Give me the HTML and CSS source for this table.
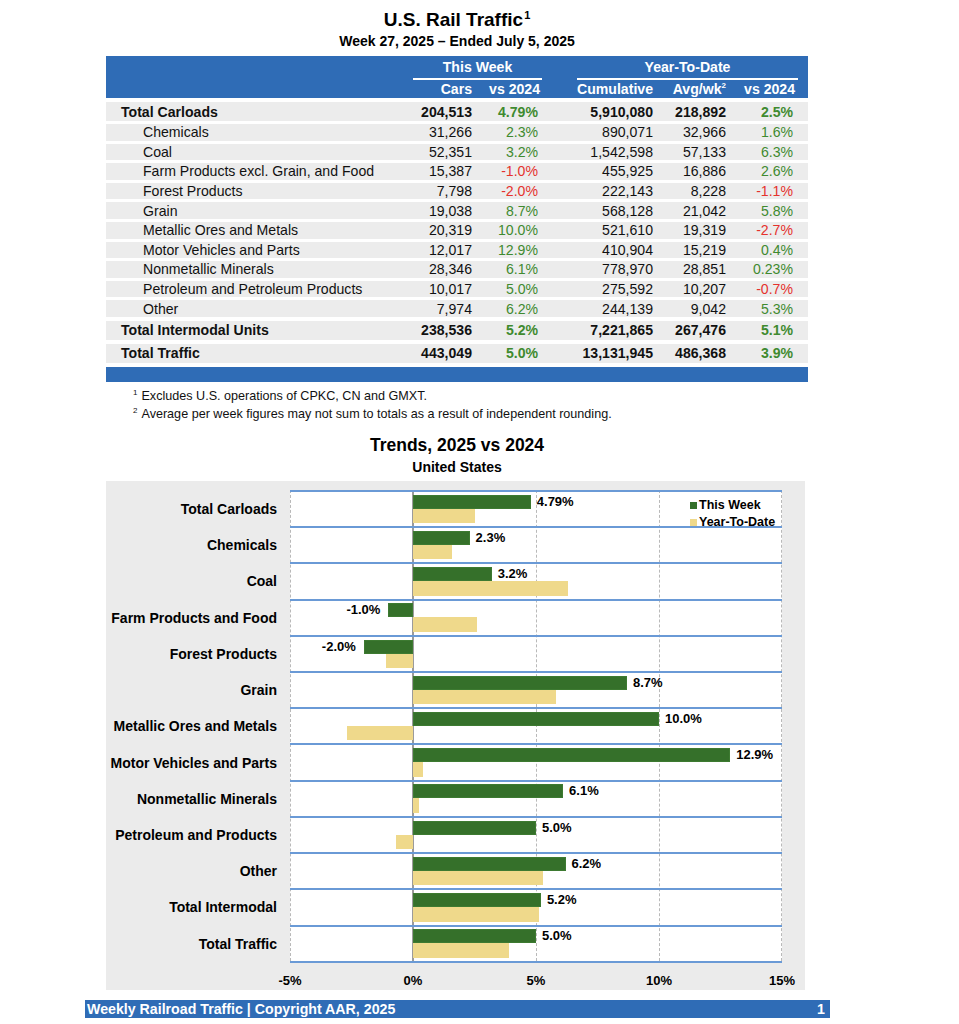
FILE: index.html
```html
<!DOCTYPE html>
<html lang="en">
<head>
<meta charset="utf-8">
<title>U.S. Rail Traffic</title>
<link rel="stylesheet" href="styles.css">
</head>
<body>
<div class="sheet">
  <h1 class="title">U.S. Rail Traffic<sup>1</sup></h1>
  <div class="subtitle">Week 27, 2025 – Ended July 5, 2025</div>

  <section class="traffic">
    <div class="thead">
      <div class="group week">This Week</div>
      <div class="group ytd">Year-To-Date</div>
      <div class="colhead c1">Cars</div>
      <div class="colhead c2">vs 2024</div>
      <div class="colhead c3">Cumulative</div>
      <div class="colhead c4">Avg/wk<sup>2</sup></div>
      <div class="colhead c5">vs 2024</div>
    </div>

    <div class="trow total first"><span class="lbl">Total Carloads</span><span>204,513</span><span class="up">4.79%</span><span>5,910,080</span><span>218,892</span><span class="up">2.5%</span></div>
    <div class="trow sub"><span class="lbl">Chemicals</span><span>31,266</span><span class="up">2.3%</span><span>890,071</span><span>32,966</span><span class="up">1.6%</span></div>
    <div class="trow sub"><span class="lbl">Coal</span><span>52,351</span><span class="up">3.2%</span><span>1,542,598</span><span>57,133</span><span class="up">6.3%</span></div>
    <div class="trow sub"><span class="lbl">Farm Products excl. Grain, and Food</span><span>15,387</span><span class="down">-1.0%</span><span>455,925</span><span>16,886</span><span class="up">2.6%</span></div>
    <div class="trow sub"><span class="lbl">Forest Products</span><span>7,798</span><span class="down">-2.0%</span><span>222,143</span><span>8,228</span><span class="down">-1.1%</span></div>
    <div class="trow sub"><span class="lbl">Grain</span><span>19,038</span><span class="up">8.7%</span><span>568,128</span><span>21,042</span><span class="up">5.8%</span></div>
    <div class="trow sub"><span class="lbl">Metallic Ores and Metals</span><span>20,319</span><span class="up">10.0%</span><span>521,610</span><span>19,319</span><span class="down">-2.7%</span></div>
    <div class="trow sub"><span class="lbl">Motor Vehicles and Parts</span><span>12,017</span><span class="up">12.9%</span><span>410,904</span><span>15,219</span><span class="up">0.4%</span></div>
    <div class="trow sub"><span class="lbl">Nonmetallic Minerals</span><span>28,346</span><span class="up">6.1%</span><span>778,970</span><span>28,851</span><span class="up">0.23%</span></div>
    <div class="trow sub"><span class="lbl">Petroleum and Petroleum Products</span><span>10,017</span><span class="up">5.0%</span><span>275,592</span><span>10,207</span><span class="down">-0.7%</span></div>
    <div class="trow sub"><span class="lbl">Other</span><span>7,974</span><span class="up">6.2%</span><span>244,139</span><span>9,042</span><span class="up">5.3%</span></div>
    <div class="trow total"><span class="lbl">Total Intermodal Units</span><span>238,536</span><span class="up">5.2%</span><span>7,221,865</span><span>267,476</span><span class="up">5.1%</span></div>
    <div class="trow total"><span class="lbl">Total Traffic</span><span>443,049</span><span class="up">5.0%</span><span>13,131,945</span><span>486,368</span><span class="up">3.9%</span></div>
    <div class="tfoot"></div>
  </section>

  <div class="notes">
    <p><sup>1</sup>Excludes U.S. operations of CPKC, CN and GMXT.</p>
    <p><sup>2</sup>Average per week figures may not sum to totals as a result of independent rounding.</p>
  </div>

  <h2 class="chart-title">Trends, 2025 vs 2024</h2>
  <div class="chart-sub">United States</div>

  <section class="chart">
    <div class="chart-body">
      <div class="cats">
        <div class="cat">Total Carloads</div>
        <div class="cat">Chemicals</div>
        <div class="cat">Coal</div>
        <div class="cat">Farm Products and Food</div>
        <div class="cat">Forest Products</div>
        <div class="cat">Grain</div>
        <div class="cat">Metallic Ores and Metals</div>
        <div class="cat">Motor Vehicles and Parts</div>
        <div class="cat">Nonmetallic Minerals</div>
        <div class="cat">Petroleum and Products</div>
        <div class="cat">Other</div>
        <div class="cat">Total Intermodal</div>
        <div class="cat">Total Traffic</div>
      </div>
      <div class="plot">
        <div class="gridlines">
          <span class="gl dash g0"></span>
          <span class="gl zero g1"></span>
          <span class="gl dash g2"></span>
          <span class="gl dash g3"></span>
          <span class="gl dash g4"></span>
        </div>
        <div class="legend">
          <div class="lg"><i class="sw wk"></i>This Week</div>
          <div class="lg"><i class="sw yt"></i>Year-To-Date</div>
        </div>

        <div class="prow"><div class="bar wk" style="margin-left:123px;width:117.8px"><span class="val pos">4.79%</span></div><div class="bar yt" style="margin-left:123px;width:61.5px"></div></div>
        <div class="prow"><div class="bar wk" style="margin-left:123px;width:56.6px"><span class="val pos">2.3%</span></div><div class="bar yt" style="margin-left:123px;width:39.4px"></div></div>
        <div class="prow"><div class="bar wk" style="margin-left:123px;width:78.7px"><span class="val pos">3.2%</span></div><div class="bar yt" style="margin-left:123px;width:155px"></div></div>
        <div class="prow"><div class="bar wk" style="margin-left:98.4px;width:24.6px"><span class="val neg">-1.0%</span></div><div class="bar yt" style="margin-left:123px;width:64px"></div></div>
        <div class="prow"><div class="bar wk" style="margin-left:73.8px;width:49.2px"><span class="val neg">-2.0%</span></div><div class="bar yt" style="margin-left:95.9px;width:27.1px"></div></div>
        <div class="prow"><div class="bar wk" style="margin-left:123px;width:214px"><span class="val pos">8.7%</span></div><div class="bar yt" style="margin-left:123px;width:142.7px"></div></div>
        <div class="prow"><div class="bar wk" style="margin-left:123px;width:246px"><span class="val pos">10.0%</span></div><div class="bar yt" style="margin-left:56.6px;width:66.4px"></div></div>
        <div class="prow"><div class="bar wk" style="margin-left:123px;width:317.3px"><span class="val pos">12.9%</span></div><div class="bar yt" style="margin-left:123px;width:9.8px"></div></div>
        <div class="prow"><div class="bar wk" style="margin-left:123px;width:150.1px"><span class="val pos">6.1%</span></div><div class="bar yt" style="margin-left:123px;width:5.7px"></div></div>
        <div class="prow"><div class="bar wk" style="margin-left:123px;width:123px"><span class="val pos">5.0%</span></div><div class="bar yt" style="margin-left:105.8px;width:17.2px"></div></div>
        <div class="prow"><div class="bar wk" style="margin-left:123px;width:152.5px"><span class="val pos">6.2%</span></div><div class="bar yt" style="margin-left:123px;width:130.4px"></div></div>
        <div class="prow"><div class="bar wk" style="margin-left:123px;width:127.9px"><span class="val pos">5.2%</span></div><div class="bar yt" style="margin-left:123px;width:125.5px"></div></div>
        <div class="prow"><div class="bar wk" style="margin-left:123px;width:123px"><span class="val pos">5.0%</span></div><div class="bar yt" style="margin-left:123px;width:95.9px"></div></div>
      </div>
    </div>
    <div class="axis">
      <span>-5%</span><span>0%</span><span>5%</span><span>10%</span><span>15%</span>
    </div>
  </section>

  <footer class="footer">
    <span>Weekly Railroad Traffic | Copyright AAR, 2025</span>
    <span>1</span>
  </footer>
</div>
</body>
</html>
```

FILE: styles.css
```css
* { box-sizing: border-box; }

html, body {
  margin: 0;
  padding: 0;
  background: #ffffff;
}

body {
  font-family: "Liberation Sans", Arial, Helvetica, sans-serif;
  color: #111111;
  width: 959px;
}

sup {
  font-size: 0.6em;
  line-height: 0;
  vertical-align: 0.65em;
}

.sheet {
  margin-left: 106px;
  width: 702px;
  padding-top: 9px;
}

.title {
  margin: 0;
  text-align: center;
  font-size: 19px;
  line-height: 22px;
  font-weight: bold;
  color: #000;
}

.title sup {
  font-size: 11px;
  margin-left: 1px;
}

.subtitle {
  margin-top: 2px;
  text-align: center;
  font-size: 14px;
  line-height: 16px;
  font-weight: bold;
  color: #000;
}

/* ---------- table ---------- */
.traffic {
  margin-top: 7px;
  font-size: 14.1px;
}

.thead,
.trow {
  display: grid;
  grid-template-columns: 306px 60px 66px 115px 73px 67px 15px;
}

.thead {
  background: #2f6cb6;
  color: #ffffff;
  font-weight: bold;
  grid-template-rows: 24px 18px;
  height: 42px;
}

.group {
  grid-row: 1;
  text-align: center;
  line-height: 22px;
  border-bottom: 2px solid #ffffff;
}

.group.week {
  grid-column: 2 / 4;
  margin-left: 1px;
  margin-right: -4px;
}

.group.ytd {
  grid-column: 4 / 7;
  margin-left: 39px;
  margin-right: -5px;
}

.colhead {
  grid-row: 2;
  text-align: right;
  line-height: 18px;
  white-space: nowrap;
}

.colhead.c1 { grid-column: 2; }
.colhead.c2 { grid-column: 3; margin-right: -2px; }
.colhead.c3 { grid-column: 4; }
.colhead.c4 { grid-column: 5; }
.colhead.c5 { grid-column: 6; margin-right: -2px; }

.colhead sup {
  font-size: 8px;
  vertical-align: 6px;
}

.trow {
  background: #ececec;
  align-items: center;
  white-space: nowrap;
}

.trow > span {
  text-align: right;
}

.trow > .lbl {
  text-align: left;
}

.trow.total {
  height: 19px;
  margin-top: 4px;
  font-weight: bold;
}

.trow.sub {
  height: 16.6px;
  margin-top: 3px;
}

.trow.total .lbl { padding-left: 15px; }
.trow.sub .lbl { padding-left: 37px; }

.up { color: #3f8a2f; }
.down { color: #e5322d; }

.tfoot {
  margin-top: 4px;
  height: 15px;
  background: #2f6cb6;
}

/* ---------- notes ---------- */
.notes {
  margin-top: 5px;
  padding-left: 27px;
  font-size: 12.6px;
  color: #111;
}

.notes p {
  margin: 0;
  line-height: 18px;
}

.notes sup {
  font-size: 8px;
  margin-right: 4px;
  vertical-align: 5px;
}

/* ---------- chart ---------- */
.chart-title {
  margin: 11px 0 0;
  text-align: center;
  font-size: 17.5px;
  line-height: 22px;
  font-weight: bold;
  color: #000;
}

.chart-sub {
  margin-top: 3px;
  text-align: center;
  font-size: 14px;
  line-height: 16px;
  font-weight: bold;
  color: #000;
}

.chart {
  margin-top: 6px;
  width: 699px;
  background: #ebebeb;
  padding-top: 9px;
}

.chart-body {
  display: grid;
  grid-template-columns: 184px 492px;
}

.cats {
  padding-right: 13px;
  display: flex;
  flex-direction: column;
}

.cat {
  height: 36.23px;
  display: flex;
  align-items: center;
  justify-content: flex-end;
  font-size: 14px;
  font-weight: bold;
  color: #000;
  white-space: nowrap;
  padding-top: 2px;
}

.plot {
  position: relative;
  background: #ffffff;
  border-bottom: 2px solid #6a9ad6;
}

.gridlines {
  position: absolute;
  inset: 0;
}

.gl {
  position: absolute;
  top: 0;
  bottom: 0;
  width: 0;
}

.gl.dash { border-left: 1px dashed #b9b9b9; }
.gl.zero { border-left: 2px solid #9b9b9b; }
.g0 { left: 0; }
.g1 { left: 122px; }
.g2 { left: 246px; }
.g3 { left: 369px; }
.g4 { left: 491px; }

.prow {
  position: relative;
  height: 36.23px;
  border-top: 2px solid #6a9ad6;
  padding-top: 2.7px;
}

.bar {
  position: relative;
}

.bar.wk {
  height: 14px;
  background: #35702a;
  box-shadow: inset 0 0 0 1px #3d7a31;
}

.bar.yt {
  height: 14.5px;
  background: #efd98b;
}

.val {
  position: absolute;
  top: 50%;
  transform: translateY(-55%);
  font-size: 13px;
  font-weight: bold;
  color: #000;
  white-space: nowrap;
  line-height: 15px;
}

.val.pos { left: calc(100% + 6px); }
.val.neg { right: calc(100% + 8px); }

.legend {
  position: absolute;
  left: 400px;
  top: 7px;
  z-index: 2;
  font-size: 12.5px;
  font-weight: bold;
  color: #000;
}

.lg {
  display: flex;
  align-items: center;
  height: 17px;
  white-space: nowrap;
}

.sw {
  display: inline-block;
  width: 7px;
  height: 7px;
  margin-right: 2px;
}

.sw.wk { background: #35702a; }
.sw.yt { background: #efd98b; }

.axis {
  display: flex;
  margin-left: 122.5px;
  padding-top: 10px;
  height: 27px;
}

.axis span {
  flex: 0 0 123px;
  width: 123px;
  text-align: center;
  font-size: 13px;
  line-height: 16px;
  font-weight: bold;
  color: #000;
}

/* ---------- footer ---------- */
.footer {
  margin-top: 10px;
  margin-left: -21px;
  width: 745px;
  height: 18px;
  background: #2f6cb6;
  color: #ffffff;
  font-size: 14.2px;
  font-weight: bold;
  line-height: 18px;
  display: flex;
  justify-content: space-between;
  padding: 0 5px 0 2px;
}
```
